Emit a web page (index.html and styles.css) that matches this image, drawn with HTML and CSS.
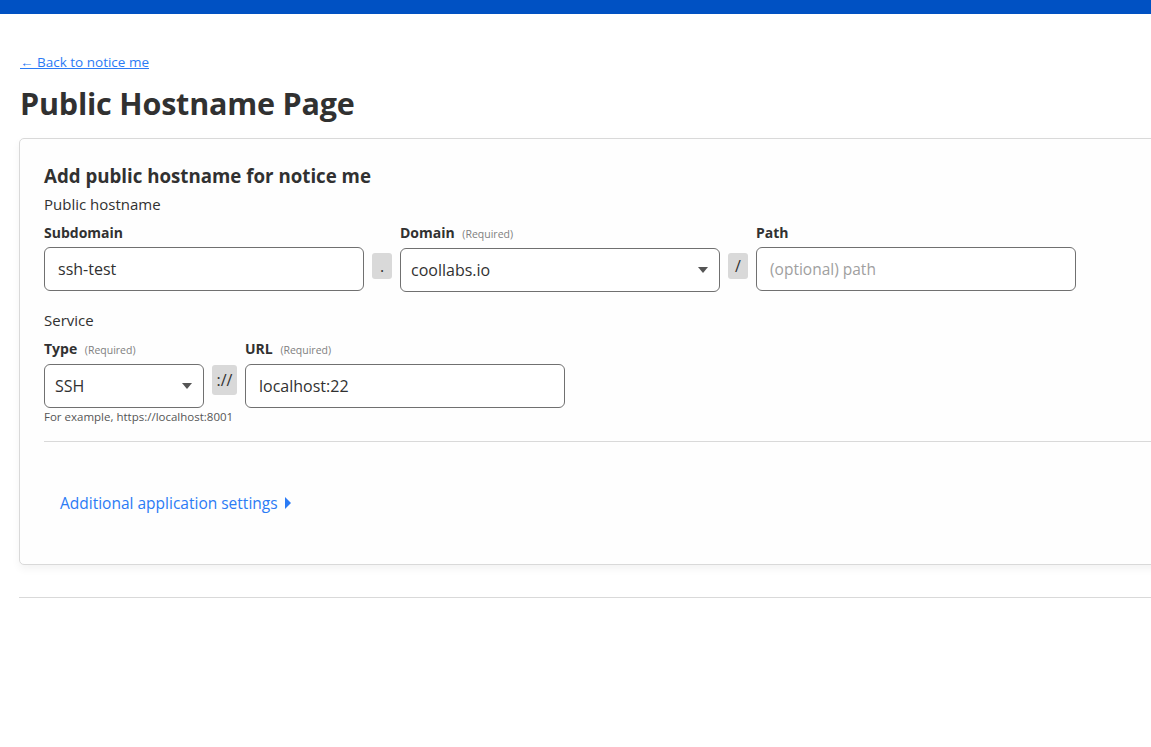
FILE: index.html
```html
<!DOCTYPE html>
<html>
<head>
<meta charset="utf-8">
<link rel="stylesheet" href="styles.css">
</head>
<body>
<div class="topbar"></div>
<main class="page">
  <a class="back" href="#">← Back to notice me</a>
  <h1 class="title">Public Hostname Page</h1>
  <section class="card">
    <h2 class="card-title">Add public hostname for notice me</h2>
    <div class="group-label">Public hostname</div>
    <div class="row">
      <div class="field w320">
        <label class="label">Subdomain</label>
        <div class="input">ssh-test</div>
      </div>
      <div class="sep">.</div>
      <div class="field w320">
        <label class="label">Domain <span class="req">(Required)</span></label>
        <div class="input select">coollabs.io<span class="caret"></span></div>
      </div>
      <div class="sep">/</div>
      <div class="field w320">
        <label class="label">Path</label>
        <div class="input placeholder">(optional) path</div>
      </div>
    </div>
    <div class="group-label service">Service</div>
    <div class="row row-service">
      <div class="field w160">
        <label class="label">Type <span class="req">(Required)</span></label>
        <div class="input select">SSH<span class="caret"></span></div>
        <div class="hint">For example, https://localhost:8001</div>
      </div>
      <div class="sep wide">://</div>
      <div class="field w320">
        <label class="label">URL <span class="req">(Required)</span></label>
        <div class="input">localhost:22</div>
      </div>
    </div>
    <hr class="divider">
    <a class="more" href="#">Additional application settings <span class="tri"></span></a>
  </section>
  <hr class="bottom-line">
</main>
</body>
</html>
```

FILE: styles.css
```css
html, body {
  margin: 0;
  padding: 0;
  overflow: hidden;
  background: #ffffff;
  font-family: "Open Sans", "Noto Sans", sans-serif;
  color: #313131;
}

.topbar {
  height: 14px;
  background: #0051c3;
}

.page {
  padding: 36px 0 0 19px;
  width: 1200px;
}

.back {
  display: inline-block;
  margin-left: 1px;
  font-size: 13.5px;
  line-height: 18px;
  color: #2b7bf5;
  text-decoration: underline;
}

.title {
  margin: 8px 0 0 1px;
  font-size: 30.5px;
  line-height: 46px;
  font-weight: 700;
  color: #313131;
  letter-spacing: -0.2px;
}

.card {
  margin-top: 12px;
  border: 1px solid #d9d9d9;
  border-radius: 5px;
  background: #fefefe;
  box-shadow: 0 4px 8px rgba(0, 0, 0, 0.05);
  padding: 22px 24px 50px 24px;
}

.card-title {
  margin: 0;
  font-size: 18.7px;
  line-height: 30px;
  font-weight: 700;
  color: #313131;
}

.group-label {
  font-size: 15px;
  line-height: 20px;
  margin-top: 3px;
}

.group-label.service {
  margin-top: 18px;
}

.row {
  display: flex;
  align-items: flex-start;
  gap: 8px;
  margin-top: 10px;
}

.row.row-service {
  margin-top: 10px;
}

.field {
  display: flex;
  flex-direction: column;
}

.w320 { width: 320px; }
.w160 { width: 160px; }

.label {
  font-size: 14px;
  line-height: 18px;
  font-weight: 700;
  color: #313131;
  margin-bottom: 5px;
}

.req {
  font-size: 10.5px;
  font-weight: 400;
  color: #808080;
  margin-left: 4px;
}

.input {
  box-sizing: border-box;
  height: 44px;
  border: 1px solid #707070;
  border-radius: 6px;
  background: #ffffff;
  padding: 0 13px;
  font-size: 16px;
  line-height: 42px;
  color: #313131;
  position: relative;
}

.input.select {
  padding-left: 10px;
}

.input.placeholder {
  color: #a0a0a0;
  font-size: 15.5px;
}

.caret {
  position: absolute;
  right: 11px;
  top: 18px;
  width: 0;
  height: 0;
  border-left: 5px solid transparent;
  border-right: 5px solid transparent;
  border-top: 6px solid #555555;
}

.sep {
  margin-top: 29px;
  width: 20px;
  height: 26px;
  border-radius: 3px;
  background: #d9d9d9;
  font-size: 16px;
  line-height: 26px;
  text-align: center;
  color: #313131;
}

.sep.wide {
  width: 25px;
  margin-top: 25px;
  height: 30px;
  line-height: 30px;
}

.hint {
  margin-top: 2px;
  font-size: 11.5px;
  line-height: 14px;
  color: #555555;
  white-space: nowrap;
}

.divider {
  margin: 17px -24px 0 0;
  border: 0;
  border-top: 1px solid #d9d9d9;
  height: 0;
}

.more {
  display: inline-flex;
  align-items: center;
  gap: 7px;
  margin: 50px 0 0 16px;
  font-size: 15.5px;
  line-height: 22px;
  color: #2b7bf5;
  text-decoration: none;
}

.tri {
  width: 0;
  height: 0;
  border-top: 6px solid transparent;
  border-bottom: 6px solid transparent;
  border-left: 6px solid #2b7bf5;
}

.bottom-line {
  margin: 32px 0 0 0;
  border: 0;
  border-top: 1px solid #d9d9d9;
  height: 0;
}
```
